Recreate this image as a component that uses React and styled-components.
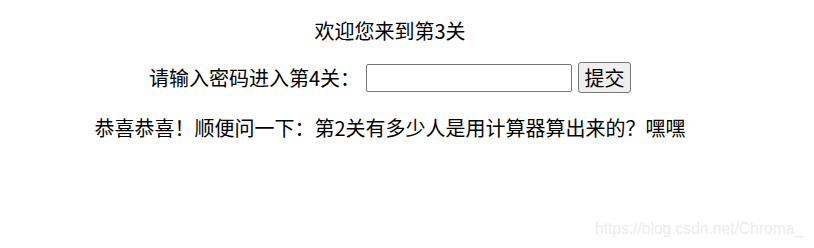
import React from "react";
import styled, { createGlobalStyle } from "styled-components";

const GlobalStyle = createGlobalStyle`
  html, body {
    margin: 0;
    padding: 0;
    background: #ffffff;
  }
  body {
    font-family: "Microsoft YaHei", "Noto Sans CJK SC", "Noto Sans", sans-serif;
    color: #000000;
  }
`;

const Page = styled.div`
  position: relative;
  width: 814px;
  height: 248px;
  overflow: hidden;
`;

const Content = styled.main`
  width: 780px;
  padding-top: 18px;
  display: flex;
  flex-direction: column;
  align-items: center;
  font-size: 20px;
  line-height: 26px;
`;

const Line = styled.p`
  margin: ${(p) => p.$top}px 0 0;
  text-align: center;
  white-space: nowrap;
`;

const Form = styled.form`
  margin: 18px 0 0;
  display: flex;
  align-items: center;
  gap: 6px;
  height: 31px;
`;

const Label = styled.label`
  white-space: nowrap;
`;

const Input = styled.input`
  box-sizing: border-box;
  width: 206px;
  height: 28px;
  margin: 1px 0 0;
  padding: 1px 2px;
  border: 1px solid #767676;
  border-radius: 2px;
  background: #ffffff;
  font: inherit;
  font-size: 16px;
`;

const Button = styled.button`
  box-sizing: border-box;
  width: 53px;
  height: 31px;
  padding: 0;
  border: 1px solid #767676;
  border-radius: 3px;
  background: #efefef;
  color: #000000;
  font-family: inherit;
  font-size: 20px;
  line-height: 26px;
`;

const Watermark = styled.span`
  position: absolute;
  right: 11px;
  bottom: 10px;
  font-family: "Liberation Sans", Arial, sans-serif;
  font-size: 15.6px;
  line-height: 18px;
  color: #ececec;
  white-space: nowrap;
`;

export default function App() {
  return (
    <Page>
      <GlobalStyle />
      <Content>
        <Line $top={0}>欢迎您来到第3关</Line>
        <Form onSubmit={(e) => e.preventDefault()}>
          <Label htmlFor="pwd">请输入密码进入第4关：</Label>
          <Input id="pwd" type="text" />
          <Button type="submit">提交</Button>
        </Form>
        <Line $top={22}>恭喜恭喜！顺便问一下：第2关有多少人是用计算器算出来的？嘿嘿</Line>
      </Content>
      <Watermark>https://blog.csdn.net/Chroma_</Watermark>
    </Page>
  );
}
